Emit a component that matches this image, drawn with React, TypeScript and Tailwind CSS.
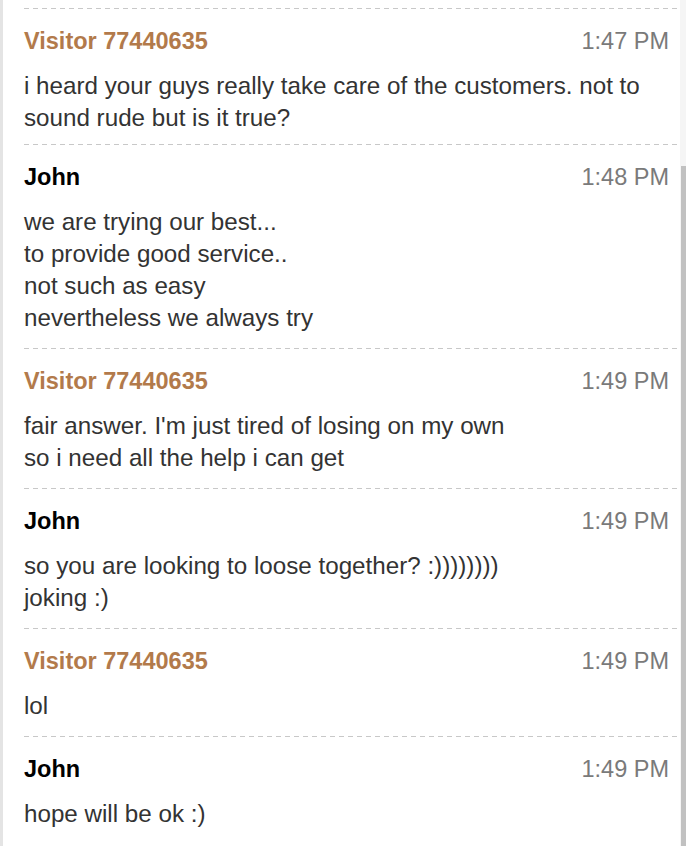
const messages = [
  {
    author: "Visitor 77440635",
    visitor: true,
    time: "1:47 PM",
    lines: ["i heard your guys really take care of the customers. not to", "sound rude but is it true?"],
  },
  {
    author: "John",
    visitor: false,
    time: "1:48 PM",
    lines: ["we are trying our best...", "to provide good service..", "not such as easy", "nevertheless we always try"],
  },
  {
    author: "Visitor 77440635",
    visitor: true,
    time: "1:49 PM",
    lines: ["fair answer. I'm just tired of losing on my own", "so i need all the help i can get"],
  },
  {
    author: "John",
    visitor: false,
    time: "1:49 PM",
    lines: ["so you are looking to loose together? :))))))))", "joking :)"],
  },
  {
    author: "Visitor 77440635",
    visitor: true,
    time: "1:49 PM",
    lines: ["lol"],
  },
  {
    author: "John",
    visitor: false,
    time: "1:49 PM",
    lines: ["hope will be ok :)"],
  },
]

const Dashes = () => (
  <div className="h-px bg-[repeating-linear-gradient(90deg,#c8c8c8_0_5px,transparent_5px_9px)]" />
)

const App = () => {
  return (
    <div className="flex h-[846px] w-[686px] overflow-hidden bg-white font-['Liberation_Sans',Arial,sans-serif]">
      <div className="flex-1 border-l-[3px] border-[#e4e4e4] pt-2 pl-[21px]">
        {messages.map((m, i) => (
          <div key={i}>
            <Dashes />
            <div className={i === 0 ? "pt-4 pr-[11px] pb-[10px]" : "pt-4 pr-[11px] pb-[14px]"}>
              <div className="flex justify-between text-[23.5px] leading-8">
                <span className={m.visitor ? "font-bold text-[#b27a4b]" : "font-bold text-black"}>{m.author}</span>
                <span className="text-[#7a7a7a]">{m.time}</span>
              </div>
              <div className="mt-[13px] text-[24.2px] leading-8 text-[#333]">
                {m.lines.map((line, j) => (
                  <div key={j} className="whitespace-nowrap">{line}</div>
                ))}
              </div>
            </div>
          </div>
        ))}
      </div>
      <div className="w-[6px] bg-[#f5f5f5] pt-[166px]">
        <div className="ml-px h-full bg-[#c1c1c1]" />
      </div>
    </div>
  )
}

export default App
